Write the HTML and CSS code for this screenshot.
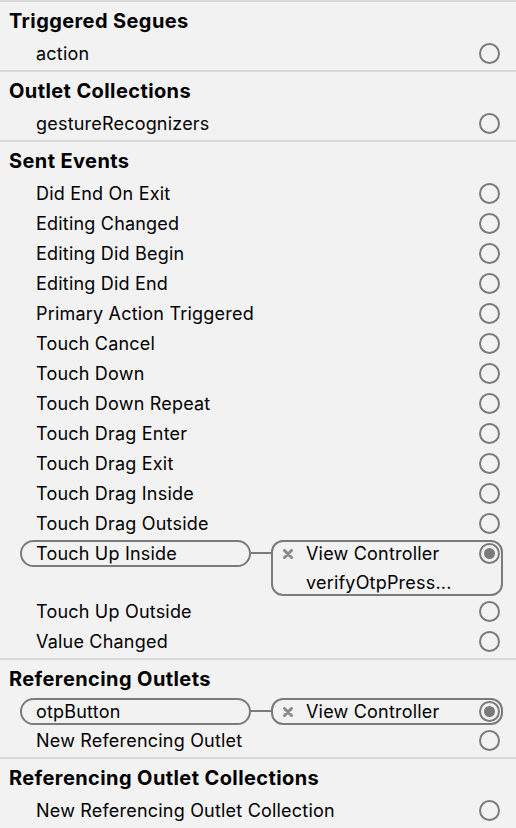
FILE: index.html
```html
<!DOCTYPE html>
<html lang="en">
<head>
    <meta charset="UTF-8">
    <meta name="viewport" content="width=device-width, initial-scale=1.0">
    <title>Connections Inspector</title>
    <link rel="stylesheet" href="styles.css">
</head>
<body>

    <div class="inspector">

        <section class="group">
            <h2 class="group-title">Triggered Segues</h2>
            <div class="row"><span class="name">action</span><span class="port"></span></div>
        </section>

        <section class="group">
            <h2 class="group-title">Outlet Collections</h2>
            <div class="row"><span class="name">gestureRecognizers</span><span class="port"></span></div>
        </section>

        <section class="group">
            <h2 class="group-title">Sent Events</h2>
            <div class="row"><span class="name">Did End On Exit</span><span class="port"></span></div>
            <div class="row"><span class="name">Editing Changed</span><span class="port"></span></div>
            <div class="row"><span class="name">Editing Did Begin</span><span class="port"></span></div>
            <div class="row"><span class="name">Editing Did End</span><span class="port"></span></div>
            <div class="row"><span class="name">Primary Action Triggered</span><span class="port"></span></div>
            <div class="row"><span class="name">Touch Cancel</span><span class="port"></span></div>
            <div class="row"><span class="name">Touch Down</span><span class="port"></span></div>
            <div class="row"><span class="name">Touch Down Repeat</span><span class="port"></span></div>
            <div class="row"><span class="name">Touch Drag Enter</span><span class="port"></span></div>
            <div class="row"><span class="name">Touch Drag Exit</span><span class="port"></span></div>
            <div class="row"><span class="name">Touch Drag Inside</span><span class="port"></span></div>
            <div class="row"><span class="name">Touch Drag Outside</span><span class="port"></span></div>
            <div class="row linked">
                <span class="name">Touch Up Inside</span>
                <span class="wire"></span>
                <div class="target">
                    <svg class="remove" width="10" height="10" viewBox="0 0 10 10"><path d="M1.5 1.5L8.5 8.5M8.5 1.5L1.5 8.5"/></svg>
                    <span class="target-name">View Controller</span>
                    <span class="port on"></span>
                    <span class="target-action">verifyOtpPress...</span>
                </div>
            </div>
            <div class="row"><span class="name">Touch Up Outside</span><span class="port"></span></div>
            <div class="row"><span class="name">Value Changed</span><span class="port"></span></div>
        </section>

        <section class="group">
            <h2 class="group-title">Referencing Outlets</h2>
            <div class="row linked">
                <span class="name">otpButton</span>
                <span class="wire"></span>
                <div class="target">
                    <svg class="remove" width="10" height="10" viewBox="0 0 10 10"><path d="M1.5 1.5L8.5 8.5M8.5 1.5L1.5 8.5"/></svg>
                    <span class="target-name">View Controller</span>
                    <span class="port on"></span>
                </div>
            </div>
            <div class="row"><span class="name">New Referencing Outlet</span><span class="port"></span></div>
        </section>

        <section class="group">
            <h2 class="group-title">Referencing Outlet Collections</h2>
            <div class="row"><span class="name">New Referencing Outlet Collection</span><span class="port"></span></div>
        </section>

    </div>

</body>
</html>
```

FILE: styles.css
```css
body {
    margin: 0;
    font-family: Inter, "Liberation Sans", Arial, sans-serif;
    background: #f2f2f2;
    color: #000;
}
.inspector {
    width: 516px;
}
.group {
    border-top: 2px solid #d8d8d8;
    padding-bottom: 2px;
}
.group-title {
    margin: 0;
    height: 36px;
    line-height: 38px;
    padding-left: 9px;
    font-size: 20px;
    font-weight: bold;
    letter-spacing: 0.4px;
}
.row {
    display: flex;
    align-items: center;
    height: 30px;
    padding-left: 20px;
    padding-right: 16px;
    font-size: 18px;
    letter-spacing: 0.2px;
}
.name {
    box-sizing: border-box;
    width: 231px;
    height: 27px;
    line-height: 24px;
    padding-left: 14px;
    border: 2px solid transparent;
    border-radius: 14px;
    white-space: nowrap;
}
.port {
    box-sizing: border-box;
    width: 21px;
    height: 21px;
    margin-left: auto;
    border: 2px solid #7b7b7b;
    border-radius: 50%;
    position: relative;
}
.port.on::after {
    content: "";
    position: absolute;
    left: 3px;
    top: 3px;
    width: 11px;
    height: 11px;
    border-radius: 50%;
    background: #7b7b7b;
}

/* rows that already have a connection */
.row.linked {
    align-items: flex-start;
    height: auto;
    padding-top: 2px;
    padding-right: 13px;
}
.row.linked .name {
    border-color: #7b7b7b;
}
.wire {
    width: 20px;
    height: 2px;
    margin-top: 12px;
    background: #7b7b7b;
}
.target {
    flex: 1;
    display: grid;
    grid-template-columns: 33px 1fr 21px;
    grid-auto-rows: 23px;
    row-gap: 6px;
    align-items: center;
    padding-right: 1px;
    border: 2px solid #7b7b7b;
    border-radius: 12px;
    min-height: 23px;
}
.target .port {
    margin: 0;
}
.remove {
    margin-left: 10px;
    stroke: #8a8a8a;
    stroke-width: 3;
    stroke-linecap: round;
}
.target-name {
    white-space: nowrap;
}
.target-action {
    grid-column: 2;
    white-space: nowrap;
}
```
